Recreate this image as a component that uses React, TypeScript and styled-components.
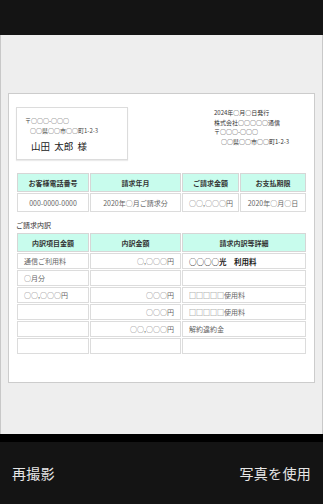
import React from 'react';
import styled, { createGlobalStyle } from 'styled-components';

const GlobalStyle = createGlobalStyle`
  html, body {
    margin: 0;
    padding: 0;
    background: #141414;
  }
  body {
    font-family: "Noto Sans CJK JP", "Noto Sans", sans-serif;
  }
  a {
    color: inherit;
    text-decoration: none;
  }
`;

const Screen = styled.div`
  width: 323px;
  height: 504px;
  display: flex;
  flex-direction: column;
  background: #141414;
  overflow: hidden;
`;

const TopBar = styled.div`
  height: 35px;
  background: #141414;
  flex-shrink: 0;
`;

const Preview = styled.div`
  height: 399px;
  box-sizing: border-box;
  background: #eeeeee;
  border-left: 1px solid #c8c8c8;
  border-right: 1px solid #c8c8c8;
  padding: 58px 7px 0 7px;
  flex-shrink: 0;
`;

const Paper = styled.div`
  height: 290px;
  box-sizing: border-box;
  background: #fff;
  border: 1px solid #cccccc;
  padding: 13px 7px 0 7px;
  color: #333;
`;

const HeadRow = styled.div`
  display: flex;
  justify-content: space-between;
  align-items: flex-start;
`;

const AddressBox = styled.div`
  width: 112px;
  height: 53px;
  box-sizing: border-box;
  border: 1px solid #dcdcdc;
  box-shadow: 0 1px 1px rgba(0, 0, 0, 0.08);
  padding: 8px 0 0 8px;
`;

const SmallLine = styled.div<{ $indent?: boolean }>`
  font-size: 6px;
  line-height: 10px;
  height: 10px;
  white-space: nowrap;
  color: #444;
  padding-left: ${(p) => (p.$indent ? '5px' : '0')};
`;

const Name = styled.div`
  font-size: 9.5px;
  line-height: 14px;
  margin-top: 3px;
  padding-left: 6px;
  color: #222;
  white-space: nowrap;
`;

const Issuer = styled.div`
  width: 93px;
  margin-top: 1px;
`;

const IssuerLine = styled(SmallLine)`
  line-height: 9.5px;
  height: 9.5px;
  color: #333;
  padding-left: ${(p) => (p.$indent ? '7px' : '0')};
`;

const Table = styled.table<{ $top: number }>`
  width: 100%;
  table-layout: fixed;
  border-collapse: separate;
  border-spacing: 1px;
  margin-top: ${(p) => p.$top}px;
`;

const Th = styled.th<{ $h: number }>`
  height: ${(p) => p.$h}px;
  box-sizing: border-box;
  background: #c8fced;
  border: 1px solid #d6d6d6;
  font-size: 7px;
  font-weight: bold;
  color: #333;
  text-align: center;
  padding: 0;
  white-space: nowrap;
`;

const Td = styled.td<{ $h: number; $align?: string; $strong?: boolean }>`
  height: ${(p) => p.$h}px;
  box-sizing: border-box;
  border: 1px solid #dcdcdc;
  font-size: ${(p) => (p.$strong ? '7.5px' : '7px')};
  font-weight: ${(p) => (p.$strong ? 'bold' : 'normal')};
  color: ${(p) => (p.$strong ? '#222' : '#666')};
  text-align: ${(p) => p.$align || 'left'};
  padding: 0 6px;
  white-space: nowrap;
`;

const CellText = styled.span`
  color: #666;
`;

const SectionLabel = styled.div`
  margin-top: 7px;
  font-size: 7px;
  line-height: 10px;
  color: #333;
`;

const Divider = styled.div`
  height: 8px;
  background: #000;
  flex-shrink: 0;
`;

const ActionBar = styled.div`
  flex: 1;
  display: flex;
  justify-content: space-between;
  align-items: center;
  padding: 0 12px;
  background: #141414;
`;

const ActionButton = styled.span`
  font-size: 14px;
  color: #e6e6e6;
  letter-spacing: 0.3px;
`;

const summaryHead = ['お客様電話番号', '請求年月', 'ご請求金額', 'お支払期限'];
const summaryData = ['000\u20110000\u20110000', '2020年○月ご請求分', '○○,○○○円', '2020年○月○日'];

const detailRows: [string, string, string, boolean?][] = [
  ['通信ご利用料', '○,○○○円', '○○○○光　利用料', true],
  ['○月分', '', ''],
  ['○○,○○○円', '○○○円', '□□□□□使用料'],
  ['', '○○○円', '□□□□□使用料'],
  ['', '○○,○○○円', '解約違約金'],
  ['', '', ''],
];

const App = () => {
  return (
    <Screen>
      <GlobalStyle />
      <TopBar />
      <Preview>
        <Paper>
          <HeadRow>
            <AddressBox>
              <SmallLine>〒○○○-○○○</SmallLine>
              <SmallLine $indent>○○県○○市○○町1-2-3</SmallLine>
              <Name>山田&nbsp;&nbsp;太郎&nbsp;&nbsp;様</Name>
            </AddressBox>
            <Issuer>
              <IssuerLine>2024年○月○日発行</IssuerLine>
              <IssuerLine>株式会社○○○○○通信</IssuerLine>
              <IssuerLine>〒○○○-○○○</IssuerLine>
              <IssuerLine $indent>○○県○○市○○町1-2-3</IssuerLine>
            </Issuer>
          </HeadRow>

          <Table $top={12}>
            <colgroup>
              <col style={{ width: '72px' }} />
              <col style={{ width: '91px' }} />
              <col style={{ width: '57px' }} />
              <col />
            </colgroup>
            <thead>
              <tr>
                {summaryHead.map((h) => (
                  <Th key={h} $h={19}>{h}</Th>
                ))}
              </tr>
            </thead>
            <tbody>
              <tr>
                {summaryData.map((d) => (
                  <Td key={d} $h={19} $align="center">
                    <CellText>{d}</CellText>
                  </Td>
                ))}
              </tr>
            </tbody>
          </Table>

          <SectionLabel>ご請求内訳</SectionLabel>

          <Table $top={2}>
            <colgroup>
              <col style={{ width: '72px' }} />
              <col style={{ width: '91px' }} />
              <col />
            </colgroup>
            <thead>
              <tr>
                <Th $h={19}>内訳項目金額</Th>
                <Th $h={19}>内訳金額</Th>
                <Th $h={19}>請求内訳等詳細</Th>
              </tr>
            </thead>
            <tbody>
              {detailRows.map(([item, amount, detail, strong], i) => (
                <tr key={i}>
                  <Td $h={16}>{item}</Td>
                  <Td $h={16} $align="right">{amount}</Td>
                  <Td $h={16} $strong={strong}>{detail}</Td>
                </tr>
              ))}
            </tbody>
          </Table>
        </Paper>
      </Preview>
      <Divider />
      <ActionBar>
        <ActionButton>再撮影</ActionButton>
        <ActionButton>写真を使用</ActionButton>
      </ActionBar>
    </Screen>
  );
};

export default App;
